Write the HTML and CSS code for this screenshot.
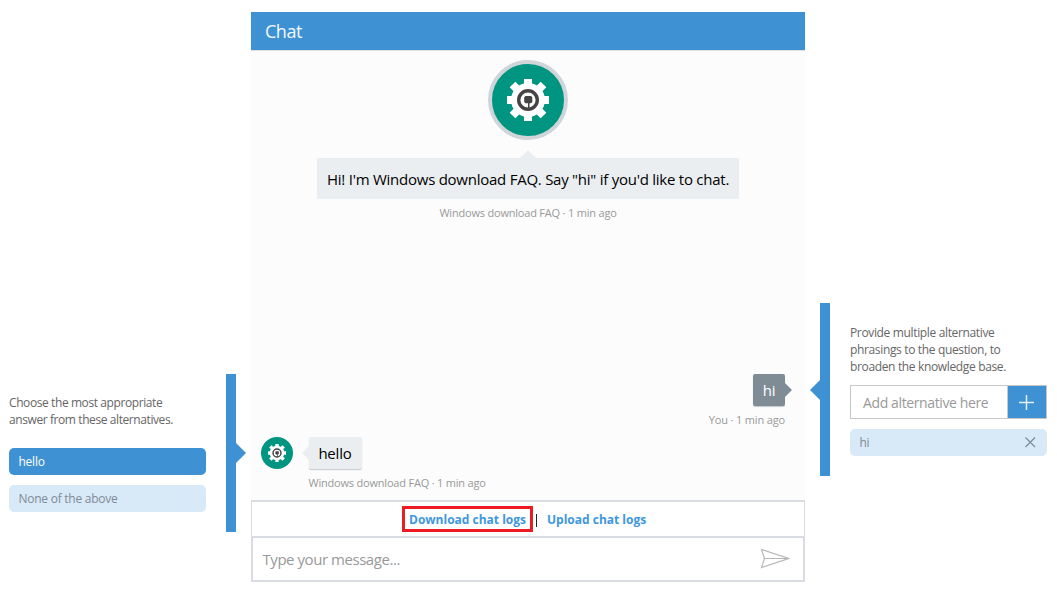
FILE: index.html
```
<!DOCTYPE html>
<html lang="en">
<head>
<meta charset="utf-8">
<title>Chat</title>
<link rel="stylesheet" href="styles.css">
</head>
<body>
<svg width="0" height="0" class="defs">
  <symbol id="bot" viewBox="0 0 42 42">
    <circle cx="21" cy="21" r="17" fill="#fff"/>
    <path fill="none" stroke="#fff" stroke-width="8" d="M21 0v42M0 21h42M5.500 5.500l31 31M36.500 5.500l-31 31"/>
    <circle cx="21" cy="21" r="9.300" fill="none" stroke="#444" stroke-width="3.400"/>
    <path fill="#444" d="M18.500 17h5.500l1.300 1.300v4.700l-1.300 1.300h-1.500v5h-1.500v-5h-2.500l-1.300-1.300v-4.700z"/>
  </symbol>
</svg>
<main class="page">
  <aside class="answers">
    <p class="hint hint-answers">Choose the most appropriate<br>answer from these alternatives.</p>
    <div class="pill pill-on"><span>hello</span></div>
    <div class="pill"><span>None of the above</span></div>
  </aside>
  <div class="bar bar-left"></div>
  <section class="chat">
    <header class="title"><span>Chat</span></header>
    <div class="log">
      <div class="avatar"><svg width="42" height="42"><use href="#bot"/></svg></div>
      <div class="greeting"><span>Hi! I'm Windows download FAQ. Say "hi" if you'd like to chat.</span></div>
      <div class="meta"><span>Windows download FAQ · 1 min ago</span></div>
      <div class="mine">
        <div class="bubble bubble-me"><span>hi</span></div>
        <div class="meta meta-me"><span>You · 1 min ago</span></div>
      </div>
      <div class="reply">
        <div class="mini"><svg width="18" height="18"><use href="#bot"/></svg></div>
        <div>
          <div class="bubble bubble-bot"><span>hello</span></div>
          <div class="meta"><span>Windows download FAQ · 1 min ago</span></div>
        </div>
      </div>
    </div>
    <div class="tools">
      <a class="download"><span>Download chat logs</span></a><i class="sep"></i><a class="upload"><span>Upload chat logs</span></a>
    </div>
    <div class="compose">
      <span>Type your message...</span>
      <svg width="30" height="22" viewBox="0 0 30 22" fill="none" stroke="#b8b8b8" stroke-width="1.200"><path d="M1.500 1.500L28.500 10.500 1.500 19.500 4.500 10.500zM4.500 10.500h24"/></svg>
    </div>
  </section>
  <div class="bar bar-right"></div>
  <aside class="phrases">
    <p class="hint">Provide multiple alternative<br>phrasings to the question, to<br>broaden the knowledge base.</p>
    <div class="add">
      <span>Add alternative here</span>
      <b class="plus"><svg width="15" height="15" stroke="#e4eff9" stroke-width="1.500"><path d="M7.500 0v15M0 7.500h15"/></svg></b>
    </div>
    <div class="pill pill-alt"><span>hi</span><svg width="11" height="11" stroke="#7f8b94" stroke-width="1.200"><path d="M.5.5l9.500 9.500M10 .5L.5 10"/></svg></div>
  </aside>
</main>
</body>
</html>
```
FILE: styles.css
```
* { box-sizing: border-box; }
body { margin: 0; background: #fff; font-family: "Open Sans", "Noto Sans", sans-serif; }
svg { display: block; }
.defs { position: absolute; }
.avatar svg, .mini svg { overflow: visible; }
symbol { overflow: visible; }
.page { display: flex; width: 1057px; height: 593px; overflow: hidden; white-space: nowrap; }
.answers { width: 226px; padding: 394px 0 0 9px; }
.hint { margin: 0; font-size: 12px; line-height: 17px; letter-spacing: -0.35px; color: #666; }
.hint-answers { margin-bottom: 20px; letter-spacing: -0.41px; }
.pill { display: flex; align-items: center; width: 197px; height: 27px; margin-bottom: 10px; padding: 0 11px 0 9.500px; border-radius: 5px; background: #d8e9f8; color: #7f8b94; font-size: 12px; letter-spacing: -0.25px; }
.pill-on { background: #3e92d3; color: #fff; }
.bar { position: relative; width: 10px; background: #3e92d3; }
.bar::after { content: ""; position: absolute; border: 10px solid transparent; }
.bar-left { height: 158px; margin-top: 374px; }
.bar-left::after { left: 10px; top: 69px; border-left-color: #3e92d3; border-right: 0; }
.bar-right { height: 173px; margin-top: 303px; }
.bar-right::after { right: 10px; top: 77px; border-right-color: #3e92d3; border-left: 0; }
.chat { width: 554px; margin: 12px 15px 0; }
.title { display: flex; align-items: center; height: 38px; padding-left: 14px; background: #3e92d3; color: #f4f9fd; font-size: 18px; letter-spacing: -0.5px; }
.log { display: flex; flex-direction: column; align-items: center; height: 450px; border-top: 1px solid #dcdfe2; background: #fcfcfc; }
.avatar { display: flex; align-items: center; justify-content: center; width: 80px; height: 80px; margin-top: 9px; border: 4px solid #d0d5da; border-radius: 50%; background: #009580; }
.greeting { position: relative; display: flex; align-items: center; width: 422px; height: 41px; margin-top: 18px; padding: 0 0 0 10px; background: #ebeef1; font-size: 15px; letter-spacing: -0.25px; color: #000; }
.greeting::before { content: ""; position: absolute; left: 203px; top: -8px; border: 8px solid transparent; border-top: 0; border-bottom-color: #ebeef1; }
.meta { height: 16px; margin-top: 6px; font-size: 11px; line-height: 16px; letter-spacing: -0.2px; color: #999; }
.meta-me { letter-spacing: -0.15px; }
.mine { display: flex; flex-direction: column; align-items: flex-end; width: 100%; margin-top: 153px; padding-right: 20px; }
.bubble { position: relative; display: flex; align-items: center; justify-content: center; height: 32px; padding-bottom: 1px; border-radius: 2px; font-size: 15px; letter-spacing: -0.2px; box-shadow: 0 1px 1px #c4c8cc; }
.bubble::before { content: ""; position: absolute; top: 9px; border: 7px solid transparent; }
.bubble-me { width: 32px; background: #808c95; color: #fff; }
.bubble-me::before { left: 32px; border-right: 0; border-left-color: #808c95; }
.bubble-bot { width: 53px; background: #ebeef1; color: #000; }
.bubble-bot::before { right: 53px; border-left: 0; border-right-color: #ebeef1; }
.reply { display: flex; width: 100%; margin-top: 9px; padding-left: 10px; gap: 15.500px; }
.mini { display: flex; align-items: center; justify-content: center; width: 32px; height: 32px; border-radius: 50%; background: #009580; }
.tools { display: flex; height: 36px; padding: 6px 0 0 150px; border: 1px solid #d9dde1; border-top-width: 2px; border-bottom: 0; color: #3e97dd; font-size: 12px; font-weight: 700; }
.download { width: 131px; height: 26px; margin-top: -2px; padding-left: 4px; border: 3px solid #ed1c24; line-height: 21px; }
.sep { width: 1px; height: 13px; margin: 6px 10px 0 3px; background: #222; }
.upload { line-height: 23px; }
.compose { display: flex; align-items: center; justify-content: space-between; height: 46px; padding: 0 13px 0 9.500px; border: 2px solid #d9dde1; color: #999; font-size: 15px; letter-spacing: -0.45px; }
.phrases { padding: 324px 0 0 20px; }
.add { display: flex; align-items: center; justify-content: space-between; width: 197px; height: 34px; margin: 10px 0; padding-left: 12px; border: 1px solid #c8c8c8; color: #999; font-size: 14px; letter-spacing: -0.38px; }
.plus { display: flex; align-items: center; justify-content: center; width: 39px; height: 32px; padding-right: 1px; border-left: 1px solid #c8c8c8; background: #3e92d3; }
.pill-alt { justify-content: space-between; }
```
